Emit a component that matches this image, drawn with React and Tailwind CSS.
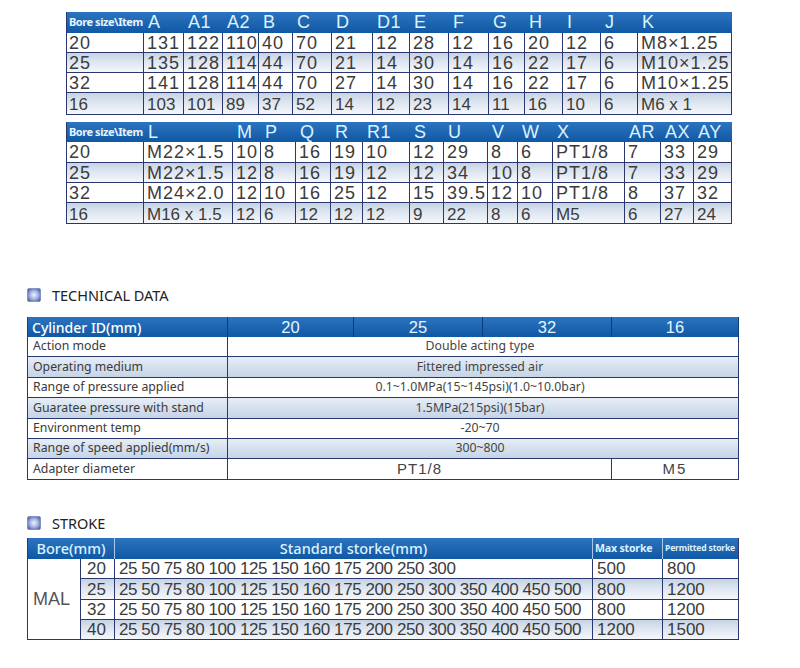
import React from "react";

const line = "border-[#2a376f]";
const blueRow = "bg-linear-to-b from-[#c6d3e4] via-[#e0e7f1] to-[#f4f7fb]";
const techBlue = "bg-linear-to-b from-[#e6edf6] to-[#c5d4e7]";
const headBg = "bg-linear-to-b from-[#2c74bf] to-[#0f58a4]";

const t1Head = ["A", "A1", "A2", "B", "C", "D", "D1", "E", "F", "G", "H", "I", "J", "K"];
const t1Rows = [
  ["20", "131", "122", "110", "40", "70", "21", "12", "28", "12", "16", "20", "12", "6", "M8×1.25"],
  ["25", "135", "128", "114", "44", "70", "21", "14", "30", "14", "16", "22", "17", "6", "M10×1.25"],
  ["32", "141", "128", "114", "44", "70", "27", "14", "30", "14", "16", "22", "17", "6", "M10×1.25"],
  ["16", "103", "101", "89", "37", "52", "14", "12", "23", "14", "11", "16", "10", "6", "M6 x 1"],
];

const t2Head = ["L", "M", "P", "Q", "R", "R1", "S", "U", "V", "W", "X", "AR", "AX", "AY"];
const t2Rows = [
  ["20", "M22×1.5", "10", "8", "16", "19", "10", "12", "29", "8", "6", "PT1/8", "7", "33", "29"],
  ["25", "M22×1.5", "12", "8", "16", "19", "12", "12", "34", "10", "8", "PT1/8", "7", "33", "29"],
  ["32", "M24×2.0", "12", "10", "16", "25", "12", "15", "39.5", "12", "10", "PT1/8", "8", "37", "32"],
  ["16", "M16 x 1.5", "12", "6", "12", "12", "12", "9", "22", "8", "6", "M5", "6", "27", "24"],
];

const rowH = ["h-[20px]", "h-[20px]", "h-[20px]", "h-[22px]"];
const rowH2 = ["h-[21px]", "h-[20px]", "h-[20px]", "h-[21px]"];

const tech = [
  ["Action mode", "Double acting type", "h-[20px]"],
  ["Operating medium", "Fittered impressed air", "h-[21px]"],
  ["Range of pressure applied", "0.1~1.0MPa(15~145psi)(1.0~10.0bar)", "h-[20px]"],
  ["Guaratee pressure with stand", "1.5MPa(215psi)(15bar)", "h-[21px]"],
  ["Environment temp", "-20~70", "h-[20px]"],
  ["Range of speed applied(mm/s)", "300~800", "h-[20px]"],
];

const strokes = [
  ["20", "25 50 75 80 100 125 150 160 175 200 250 300", "500", "800", "h-[20px]"],
  ["25", "25 50 75 80 100 125 150 160 175 200 250 300 350 400 450 500", "800", "1200", "h-[21px]"],
  ["32", "25 50 75 80 100 125 150 160 175 200 250 300 350 400 450 500", "800", "1200", "h-[20px]"],
  ["40", "25 50 75 80 100 125 150 160 175 200 250 300 350 400 450 500", "1200", "1500", "h-[20px]"],
];

function Mark() {
  return (
    <svg width="14" height="14" viewBox="0 0 14 14">
      <defs>
        <radialGradient id="mk" cx="50%" cy="50%" r="62%">
          <stop offset="0%" stopColor="#eef2fc" />
          <stop offset="50%" stopColor="#a7b6e2" />
          <stop offset="100%" stopColor="#4a5ca3" />
        </radialGradient>
      </defs>
      <rect x="0.5" y="0.5" width="13" height="13" rx="1.5" fill="url(#mk)" stroke="#6577b8" strokeWidth="0.6" />
    </svg>
  );
}

function Heading({ children, className }) {
  return (
    <div className={`ml-[27px] h-[16px] flex items-center gap-[11px] ${className}`}>
      <Mark />
      <span className="font-['Noto_Sans',sans-serif] text-[14.5px] text-[#222] leading-none">{children}</span>
    </div>
  );
}

function DimTable({ head, rows, heights, cols, headH, className }) {
  return (
    <div className={`ml-[66px] w-[665px] grid ${cols} border-l ${line} font-['Liberation_Sans',Arial,sans-serif] ${className}`}>
      <div className={`${headH} ${headBg} flex items-center pl-[2px] font-['Noto_Sans',sans-serif] font-bold text-[11px] tracking-[-0.45px] text-[#e4f5ff]`}>
        {"Bore size\\Item"}
      </div>
      {head.map((h) => (
        <div key={h} className={`${headH} ${headBg} flex items-center pl-[4px] text-[18px] tracking-[0.5px] text-[#dcf3ff]`}>
          {h}
        </div>
      ))}
      {rows.map((r, i) =>
        r.map((c, j) => (
          <div
            key={i + "-" + j}
            className={`${heights[i]} flex items-center ${j === 0 ? "pl-[2px]" : "pl-[3px]"} border-r border-b ${line} ${i % 2 ? blueRow : "bg-white"} ${i === 3 ? "text-[17px] tracking-[0px] pt-[2px]" : "text-[18px] tracking-[1px]"} leading-none text-[#3b3b3b] whitespace-nowrap overflow-hidden`}
          >
            {c}
          </div>
        ))
      )}
    </div>
  );
}

export default function App() {
  return (
    <div className="w-[800px] h-[668px] bg-white overflow-hidden pt-[12px]">
      <DimTable
        head={t1Head}
        rows={t1Rows}
        heights={rowH}
        headH="h-[21px]"
        cols="grid-cols-[77px_40px_39px_36px_34px_39px_41px_37px_39px_40px_36px_38px_38px_37px_94px]"
      />
      <DimTable
        head={t2Head}
        rows={t2Rows}
        heights={rowH2}
        headH="h-[20px]"
        className="mt-[7px]"
        cols="grid-cols-[77px_89px_28px_35px_35px_32px_47px_34px_44px_30px_35px_72px_36px_33px_38px]"
      />

      <Heading className="mt-[63px]">TECHNICAL DATA</Heading>

      <div className={`ml-[27px] mt-[14px] w-[711px] grid grid-cols-[200px_126px_129px_129px_127px] border-l ${line} font-['Noto_Sans',sans-serif] text-[12.3px]`}>
        <div className={`h-[20px] ${headBg} flex items-center pl-[4px] border-r border-[#0b3d7a] text-[14px] font-medium text-white`}>
          Cylinder ID(mm)
        </div>
        {["20", "25", "32", "16"].map((n) => (
          <div key={n} className={`h-[20px] ${headBg} flex items-center justify-center border-r border-[#0b3d7a] font-['Liberation_Sans',Arial,sans-serif] text-[16.5px] text-[#e2f5ff]`}>
            {n}
          </div>
        ))}
        {tech.map(([label, value, h], i) => (
          <React.Fragment key={label}>
            <div className={`${h} flex items-center pl-[5px] border-r border-b ${line} ${i % 2 ? techBlue : "bg-white"} text-[#3a3a3a] whitespace-nowrap`}>
              {label}
            </div>
            <div className={`${h} col-span-4 flex items-center justify-center pr-[6px] border-r border-b ${line} ${i % 2 ? techBlue : "bg-white"} text-[#444]`}>
              {value}
            </div>
          </React.Fragment>
        ))}
        <div className={`h-[21px] flex items-center pl-[5px] border-r border-b ${line} bg-white text-[#3a3a3a]`}>
          Adapter diameter
        </div>
        <div className={`h-[21px] col-span-3 flex items-center justify-center border-r border-b ${line} bg-white font-['Liberation_Sans',Arial,sans-serif] text-[15px] tracking-[1px] text-[#444]`}>
          PT1/8
        </div>
        <div className={`h-[21px] flex items-center justify-center border-r border-b ${line} bg-white font-['Liberation_Sans',Arial,sans-serif] text-[15px] tracking-[2px] text-[#444]`}>
          M5
        </div>
      </div>

      <Heading className="mt-[35px]">STROKE</Heading>

      <div className={`ml-[27px] mt-[7px] w-[711px] grid grid-cols-[53px_34px_478px_70px_76px] border-l ${line} font-['Liberation_Sans',Arial,sans-serif]`}>
        <div className={`h-[21px] col-span-2 ${headBg} flex items-center justify-center border-r border-[#a9c8ea] font-['Noto_Sans',sans-serif] font-medium text-[14.5px] text-[#dcf2ff]`}>
          Bore(mm)
        </div>
        <div className={`h-[21px] ${headBg} flex items-center justify-center border-r border-[#a9c8ea] font-['Noto_Sans',sans-serif] font-medium text-[14.5px] text-[#dcf2ff]`}>
          Standard storke(mm)
        </div>
        <div className={`h-[21px] ${headBg} flex items-center pl-[2px] border-r border-[#a9c8ea] font-['Noto_Sans',sans-serif] font-bold text-[10.6px] tracking-[-0.2px] text-[#dcf2ff] whitespace-nowrap`}>
          Max storke
        </div>
        <div className={`h-[21px] ${headBg} flex items-center pl-[2px] border-r ${line} font-['Noto_Sans',sans-serif] font-bold text-[8.6px] tracking-[-0.2px] text-[#dcf2ff] whitespace-nowrap`}>
          Permitted storke
        </div>
        <div className={`row-span-4 flex items-center pl-[5px] border-r border-b ${line} bg-white text-[18px] text-[#555]`}>
          MAL
        </div>
        {strokes.map(([bore, std, max, perm, h], i) => {
          const bg = i % 2 ? blueRow : "bg-white";
          const cell = `${h} flex items-center border-r border-b ${line} ${bg} text-[17px] leading-none text-[#3b3b3b] whitespace-nowrap overflow-hidden`;
          return (
            <React.Fragment key={bore}>
              <div className={`${cell} pl-[6px]`}>{bore}</div>
              <div className={`${cell} pl-[4px] tracking-[-0.42px]`}>{std}</div>
              <div className={`${cell} pl-[4px]`}>{max}</div>
              <div className={`${cell} pl-[4px]`}>{perm}</div>
            </React.Fragment>
          );
        })}
      </div>
    </div>
  );
}
